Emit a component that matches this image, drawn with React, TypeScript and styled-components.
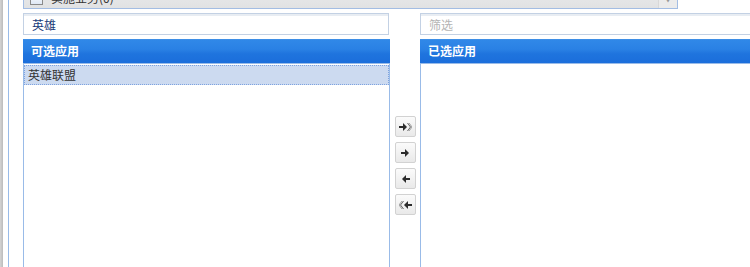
import React from "react";
import styled, { createGlobalStyle } from "styled-components";

const Global = createGlobalStyle`
  html, body { margin: 0; padding: 0; background: #fff; overflow: hidden; }
  body { font-family: "Noto Sans CJK SC", "Noto Sans", sans-serif; font-size: 12px; }
`;

const Page = styled.div`
  display: flex;
  width: 750px;
  height: 267px;
  overflow: hidden;
`;

const Strip = styled.div`
  width: 3px;
  flex: none;
  background: linear-gradient(to right, #d4d4d4, #bcbcbc);
`;

const Frame = styled.div`
  margin-left: 5px;
  border-left: 1px solid #99bbe8;
  padding-left: 14px;
  flex: 1;
  display: flex;
  flex-direction: column;
  min-width: 0;
`;

const Combo = styled.div`
  margin-top: -13px;
  width: 655px;
  height: 22px;
  box-sizing: border-box;
  border: 1px solid #a3bde3;
  background: linear-gradient(#e9eaeb, #e1e2e3);
  display: flex;
  align-items: center;
  flex: none;
`;

const ComboIcon = styled.div`
  width: 11px;
  height: 11px;
  margin-left: 6px;
  border: 1px solid #8a8a8a;
  background: linear-gradient(#ffffff, #dfe8f5);
  flex: none;
`;

const ComboText = styled.span`
  margin-left: 8px;
  color: #333;
  flex: 1;
  line-height: 20px;
`;

const ComboTrigger = styled.div`
  width: 18px;
  height: 20px;
  border-left: 1px solid #d8d8d8;
  background: #ebebeb;
  display: flex;
  align-items: center;
  justify-content: center;
  color: #999;
  font-size: 8px;
`;

const Row = styled.div<{ $gap?: number }>`
  display: flex;
  margin-top: ${(p) => p.$gap ?? 0}px;
  flex: none;
`;

const Input = styled.div<{ $placeholder?: boolean }>`
  width: 366px;
  height: 22px;
  box-sizing: border-box;
  border: 1px solid #c3d1e4;
  box-shadow: inset 0 2px 0 #e8edf3;
  padding: 2px 0 0 8px;
  line-height: 18px;
  color: ${(p) => (p.$placeholder ? "#b4b4b4" : "#173a78")};
  flex: none;
`;

const Spacer = styled.div<{ $w: number }>`
  width: ${(p) => p.$w}px;
  flex: none;
`;

const Panel = styled.div`
  width: 367px;
  height: 240px;
  box-sizing: border-box;
  border: 1px solid #99bbe8;
  border-top: none;
  flex: none;
  display: flex;
  flex-direction: column;
`;

const Header = styled.div`
  height: 25px;
  margin: 0 -1px;
  box-sizing: border-box;
  border-top: 1px solid #3d8ee6;
  border-bottom: 1px solid #99bbe8;
  background: linear-gradient(#3088e8 0%, #2a81e4 40%, #1f74de 60%, #1b6edb 100%);
  color: #fff;
  font-weight: bold;
  padding-left: 8px;
  line-height: 22px;
`;

const Item = styled.div<{ $selected?: boolean }>`
  height: 20px;
  margin-top: 1px;
  box-sizing: border-box;
  border: 1px dotted #7ea3e0;
  background: ${(p) => (p.$selected ? "#ccdaf0" : "transparent")};
  color: #333;
  padding-left: 3px;
  line-height: 17px;
`;

const ButtonCol = styled.div`
  width: 30px;
  flex: none;
  display: flex;
  flex-direction: column;
  align-items: flex-start;
  padding: 77px 0 0 5px;
  box-sizing: border-box;
  gap: 5px;
`;

const MoveButton = styled.button`
  width: 21px;
  height: 21px;
  padding: 0;
  box-sizing: border-box;
  border: 1px solid #d2d2d2;
  border-radius: 2px;
  background: linear-gradient(#fbfbfb, #e9e9e9);
  display: flex;
  align-items: center;
  justify-content: center;
`;

type Kind = "allRight" | "right" | "left" | "allLeft";

const Arrow: React.FC<{ kind: Kind }> = ({ kind }) => {
  const right = kind === "allRight" || kind === "right";
  const double = kind === "allRight" || kind === "allLeft";
  return (
    <svg
      width="13"
      height="10"
      viewBox="0 0 13 10"
      style={{ transform: right ? "none" : "scaleX(-1)" }}
    >
      <path d={double ? "M0 4h4V1l4 4-4 4V6H0z" : "M2 4h4V1l4 4-4 4V6H2z"} fill="#2b2b2b" />
      {double && (
        <>
          <path d="M8.5 1l3 4-3 4" fill="none" stroke="#555" strokeWidth="0.9" />
          <path d="M10 1l3 4-3 4" fill="none" stroke="#888" strokeWidth="0.8" />
        </>
      )}
    </svg>
  );
};

export default function App() {
  return (
    <>
      <Global />
      <Page>
        <Strip />
        <Frame>
          <Combo>
            <ComboIcon />
            <ComboText>实施业务(0)</ComboText>
            <ComboTrigger>▼</ComboTrigger>
          </Combo>
          <Row $gap={4}>
            <Input>英雄</Input>
            <Spacer $w={31} />
            <Input $placeholder>筛选</Input>
          </Row>
          <Row $gap={4}>
            <Panel>
              <Header>可选应用</Header>
              <Item $selected>英雄联盟</Item>
            </Panel>
            <ButtonCol>
              <MoveButton><Arrow kind="allRight" /></MoveButton>
              <MoveButton><Arrow kind="right" /></MoveButton>
              <MoveButton><Arrow kind="left" /></MoveButton>
              <MoveButton><Arrow kind="allLeft" /></MoveButton>
            </ButtonCol>
            <Panel>
              <Header>已选应用</Header>
            </Panel>
          </Row>
        </Frame>
      </Page>
    </>
  );
}
